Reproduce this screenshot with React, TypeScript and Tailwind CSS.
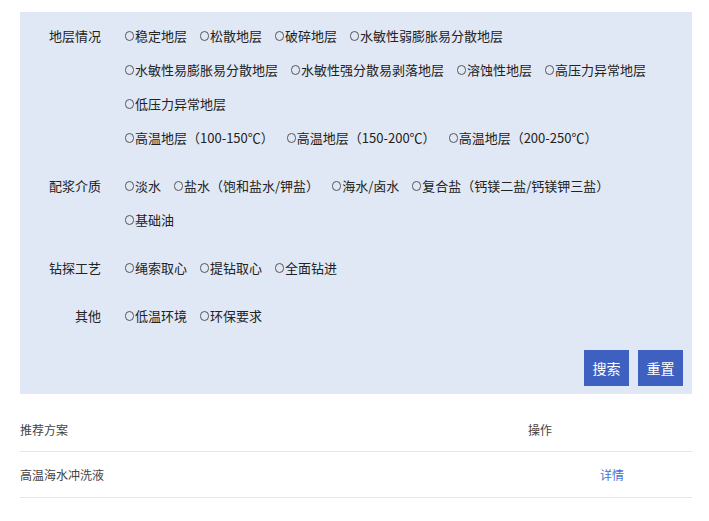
import React from "react";

const groups: { label: string; lines: string[][] }[] = [
  {
    label: "地层情况",
    lines: [
      ["稳定地层", "松散地层", "破碎地层", "水敏性弱膨胀易分散地层"],
      ["水敏性易膨胀易分散地层", "水敏性强分散易剥落地层", "溶蚀性地层", "高压力异常地层"],
      ["低压力异常地层"],
      ["高温地层（100-150℃）", "高温地层（150-200℃）", "高温地层（200-250℃）"],
    ],
  },
  {
    label: "配浆介质",
    lines: [
      ["淡水", "盐水（饱和盐水/钾盐）", "海水/卤水", "复合盐（钙镁二盐/钙镁钾三盐）"],
      ["基础油"],
    ],
  },
  { label: "钻探工艺", lines: [["绳索取心", "提钻取心", "全面钻进"]] },
  { label: "其他", lines: [["低温环境", "环保要求"]] },
];

function Option({ text }: { text: string }) {
  return (
    <span className="flex items-center mr-[13px] whitespace-nowrap">
      <span className="inline-block w-[9px] h-[10px] rounded-full border border-[#555] mr-[1px]" />
      <span>{text}</span>
    </span>
  );
}

export default function App() {
  return (
    <div
      className="w-[709px] h-[521px] bg-white text-[13px] text-[#222]"
      style={{ fontFamily: '"Noto Sans CJK SC", "Noto Sans", sans-serif' }}
    >
      <div className="pt-[12px] pl-[20px] pr-[17px]">
        <div className="bg-[#e1e8f5] pt-[7px] pb-[8px] pr-[9px]">
          <div className="flex flex-col gap-[14px]">
            {groups.map((g) => (
              <div key={g.label} className="flex">
                <div className="w-[81px] text-right h-[34px] leading-[34px] shrink-0">{g.label}</div>
                <div className="ml-[24px] flex flex-col">
                  {g.lines.map((line, i) => (
                    <div key={i} className="flex h-[34px] items-center">
                      {line.map((t) => (
                        <Option key={t} text={t} />
                      ))}
                    </div>
                  ))}
                </div>
              </div>
            ))}
          </div>
          <div className="flex justify-end gap-[9px] mt-[17px]">
            <button className="w-[45px] h-[36px] bg-[#3e60c1] text-white text-[14px]">搜索</button>
            <button className="w-[45px] h-[36px] bg-[#3e60c1] text-white text-[14px]">重置</button>
          </div>
        </div>
        <div className="mt-[14px] text-[#444] text-[12px]">
          <div className="flex h-[44px] items-center border-b border-[#e6e6e6]">
            <div className="flex-1">推荐方案</div>
            <div className="w-[164px]">操作</div>
          </div>
          <div className="flex h-[46px] items-center border-b border-[#e6e6e6]">
            <div className="flex-1">高温海水冲洗液</div>
            <div className="w-[164px] pl-[72px] text-[#4a6fd0]">详情</div>
          </div>
        </div>
      </div>
    </div>
  );
}
